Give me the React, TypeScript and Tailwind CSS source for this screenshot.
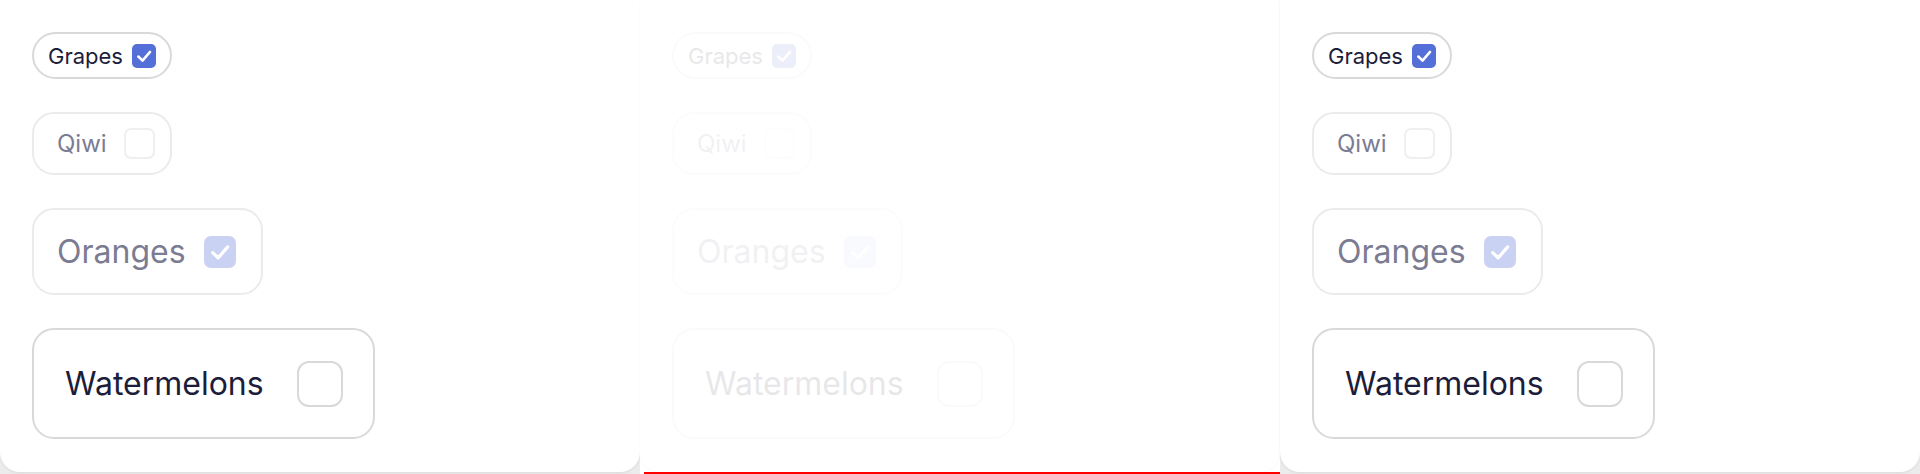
import React from "react";

const Check = ({ className }: { className?: string }) => (
  <svg viewBox="0 0 24 24" className={className} fill="none">
    <path d="M5.8 12.6 L10.4 17 L18.6 7.6" stroke="white" strokeWidth="2.8" strokeLinecap="round" strokeLinejoin="round" />
  </svg>
);

function Items() {
  return (
    <div className="flex flex-col items-start gap-[33px]">
      <div className="flex items-center h-[47px] rounded-full border-2 border-[#d9d9db] pl-[14px] pr-[14px] gap-[9px]">
        <span className="text-[22px] leading-none text-[#1c1d3a] w-[75px] whitespace-nowrap">Grapes</span>
        <span className="flex items-center justify-center w-[24px] h-[24px] rounded-[5px] bg-[#5470d8]">
          <Check className="w-[22px] h-[22px]" />
        </span>
      </div>
      <div className="flex items-center h-[63px] rounded-[22px] border-2 border-[#ebebec] pl-[23px] pr-[15px] gap-[17px]">
        <span className="text-[24px] leading-none text-[#7b7c91] w-[50px] whitespace-nowrap">Qiwi</span>
        <span className="w-[31px] h-[31px] rounded-[7px] border-2 border-[#efeff0]" />
      </div>
      <div className="flex items-center h-[87px] rounded-[22px] border-2 border-[#ebebec] pl-[23px] pr-[25px] gap-[20px]">
        <span className="text-[32px] leading-none text-[#7b7c91] w-[127px] whitespace-nowrap">Oranges</span>
        <span className="flex items-center justify-center w-[32px] h-[32px] rounded-[7px] bg-[#c9d2f3]">
          <Check className="w-[28px] h-[28px]" />
        </span>
      </div>
      <div className="flex items-center h-[111px] rounded-[22px] border-2 border-[#d9d9db] pl-[31px] pr-[30px] gap-[34px]">
        <span className="text-[32px] leading-none text-[#1c1d3a] w-[198px] whitespace-nowrap">Watermelons</span>
        <span className="w-[46px] h-[46px] rounded-[12px] border-2 border-[#d9d9db]" />
      </div>
    </div>
  );
}

export default function App() {
  return (
    <div
      className="flex w-[1920px] h-[474px] bg-[#ececec] overflow-hidden"
      style={{ fontFamily: "Inter, 'Noto Sans', sans-serif" }}
    >
      <div className="w-[640px] flex flex-col">
        <div className="h-[472px] bg-white rounded-b-[20px] p-8 shadow-[0_1px_3px_rgba(0,0,0,0.08)]">
          <Items />
        </div>
      </div>
      <div className="w-[640px] flex flex-col bg-white">
        <div className="h-[472px] bg-white rounded-b-[20px] p-8 shadow-[0_1px_2px_rgba(0,0,0,0.03)]">
          <div className="opacity-[0.1]">
            <Items />
          </div>
        </div>
        <div className="h-[2px] ml-[4px] bg-[#ff0000]" />
      </div>
      <div className="w-[640px] flex flex-col">
        <div className="h-[472px] bg-white rounded-b-[20px] p-8 shadow-[0_1px_3px_rgba(0,0,0,0.08)]">
          <Items />
        </div>
      </div>
    </div>
  );
}
